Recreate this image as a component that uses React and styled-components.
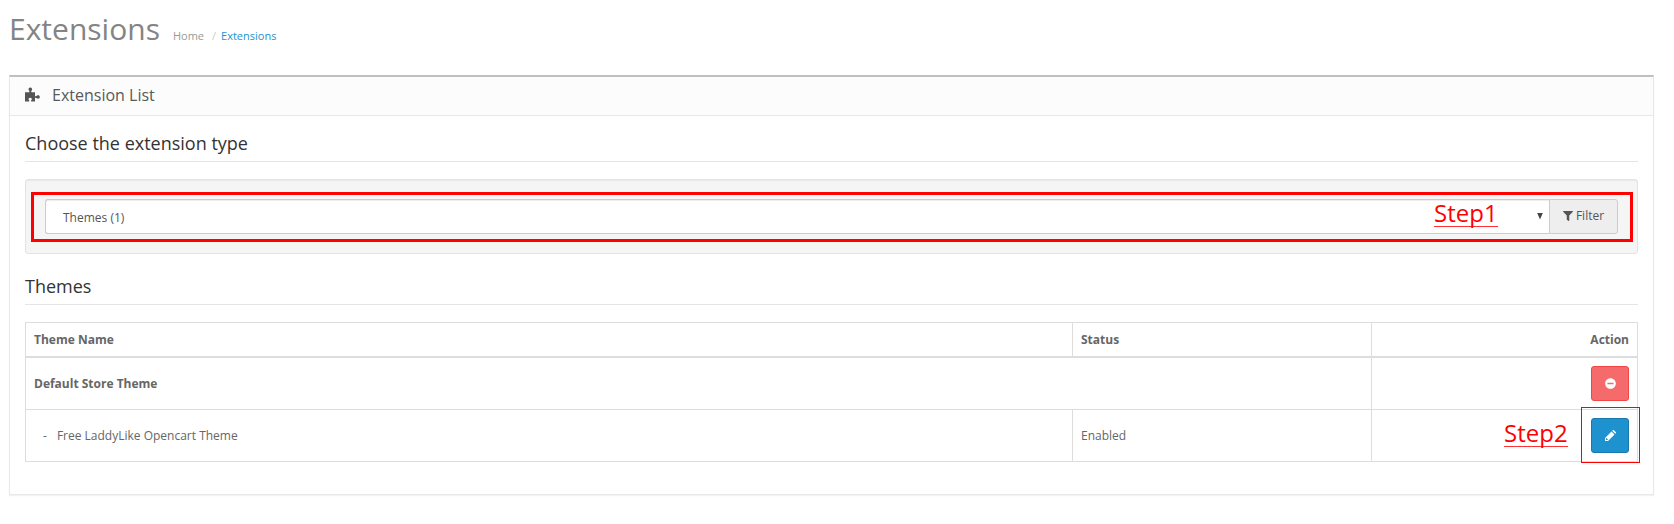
import React from "react";
import styled, { createGlobalStyle } from "styled-components";
import { FaFilter, FaMinusCircle } from "react-icons/fa";

const GlobalStyle = createGlobalStyle`
  *, *::before, *::after { box-sizing: border-box; }
  body {
    margin: 0;
    background: #fff;
    color: #666;
    font: 12px/17px "Open Sans", sans-serif;
  }
  svg { display: block; }
`;

const Page = styled.main`
  position: relative;
  height: 524px;
  padding: 0 20px 0 9px;
  overflow: hidden;
`;

const PageHeader = styled.header`
  display: flex;
  align-items: baseline;
  height: 75px;
  padding-top: 9px;
`;

const Title = styled.h1`
  margin: 0;
  font-size: 30px;
  line-height: 40px;
  font-weight: 400;
  color: #848484;
`;

const Breadcrumb = styled.ul`
  display: flex;
  margin: 0 0 0 13px;
  padding: 0;
  list-style: none;
  font-size: 11px;
`;

const Crumb = styled.li`
  color: ${(p) => (p.$current ? "#1e91cf" : "#999")};
  &:not(:first-child)::before {
    content: "/";
    padding: 0 5px 0 8px;
    color: #ccc;
  }
`;

const Panel = styled.section`
  width: 1645px;
  height: 420px;
  border: 1px solid #e8e8e8;
  border-top: 2px solid #bfbfbf;
  box-shadow: 0 1px 1px rgba(0, 0, 0, 0.05);
`;

const PanelHeading = styled.div`
  display: flex;
  align-items: center;
  gap: 12px;
  height: 39px;
  padding: 0 15px 2px;
  border-bottom: 1px solid #e8e8e8;
  background: #fcfcfc;
  color: #4c4d5a;
`;

const PuzzleIcon = styled.svg`
  width: 15px;
  height: 15px;
  margin-top: -1px;
  fill: #555;
`;

const PanelTitle = styled.h3`
  margin: 0;
  font-size: 16px;
  line-height: 20px;
  font-weight: 400;
  color: #595959;
`;

const PanelBody = styled.div`
  padding: 15px 15px 0 15px;
`;

const Legend = styled.h2`
  height: 31px;
  margin: 0 0 17px;
  border-bottom: 1px solid #e5e5e5;
  font-size: 18px;
  line-height: 25px;
  font-weight: 400;
  color: #333;
`;

const Well = styled.div`
  height: 75px;
  margin-bottom: 20px;
  padding: 19px;
  border: 1px solid #e3e3e3;
  border-radius: 3px;
  background: #f5f5f5;
  box-shadow: inset 0 1px 1px rgba(0, 0, 0, 0.05);
`;

const InputGroup = styled.div`
  display: flex;
  height: 35px;
`;

const Select = styled.div`
  display: flex;
  flex: 1;
  align-items: center;
  justify-content: space-between;
  padding: 2px 6px 0 17px;
  border: 1px solid #ccc;
  border-right: 0;
  border-radius: 3px 0 0 3px;
  background: #fff;
  color: #555;
  box-shadow: inset 0 1px 1px rgba(0, 0, 0, 0.075);
`;

const Caret = styled.i`
  width: 6px;
  height: 7px;
  margin-bottom: 3px;
  background: #444;
  clip-path: polygon(0 0, 100% 0, 50% 100%);
`;

const FilterButton = styled.button`
  display: flex;
  align-items: center;
  justify-content: center;
  gap: 3px;
  width: 69px;
  padding: 0 0 2px;
  border: 1px solid #ccc;
  border-radius: 0 3px 3px 0;
  background: #eee;
  color: #555;
  font: inherit;
`;

const Table = styled.table`
  width: 1613px;
  border-collapse: collapse;
  table-layout: fixed;
`;

const cell = `
  padding: 0 8px;
  border: 1px solid #ddd;
  text-align: left;
`;

const Th = styled.th`
  ${cell}
  height: 34px;
  border-bottom-width: 2px;
  font-weight: 700;
  text-align: ${(p) => (p.$end ? "right" : "left")};
`;

const Td = styled.td`
  ${cell}
  height: ${(p) => (p.$tall ? 53 : 52)}px;
  font-weight: ${(p) => (p.$strong ? 700 : 400)};
`;

const ChildName = styled.span`
  display: flex;
  gap: 10px;
  padding-left: 9px;
`;

const ActionButton = styled.button`
  display: flex;
  align-items: center;
  justify-content: center;
  width: 38px;
  height: 35px;
  margin-left: auto;
  padding: 0;
  border: 1px solid ${(p) => (p.$danger ? "#f24545" : "#1978ab")};
  border-radius: 3px;
  background: ${(p) => (p.$danger ? "#f56b6b" : "#1e91cf")};
  color: #fff;
`;

const Highlight = styled.div`
  position: absolute;
  left: ${(p) => p.$x}px;
  top: ${(p) => p.$y}px;
  width: ${(p) => p.$w}px;
  height: ${(p) => p.$h}px;
  border: ${(p) => p.$line}px solid #f00;
  pointer-events: none;
`;

const StepLabel = styled.span`
  position: absolute;
  left: ${(p) => p.$x}px;
  top: ${(p) => p.$y}px;
  height: 28px;
  border-bottom: 1px solid #f33;
  font-size: 24px;
  line-height: 28px;
  color: #f00;
`;

const Puzzle = () => (
  <PuzzleIcon viewBox="0 0 15 15" aria-hidden="true">
    <path d="M0 5.2H4.2C4.7 5 4.5 4.3 4 3.6C2.9 2 3.8.4 5.3.4S7.7 2 6.7 3.6C6.2 4.3 6 5 6.5 5.2H10V9C10.3 9.6 10.9 9.4 11.7 8.8C13.2 7.8 14.8 8.5 14.8 10S13.2 12.3 11.7 11.3C10.9 10.7 10.3 10.6 10 11.2V14.4H6.3C5.8 14 6.1 13.4 6.6 12.8C7.3 11.7 6.5 10.7 5.2 10.7S3.1 11.7 3.8 12.8C4.3 13.4 4.6 14 4.1 14.4H0Z" />
  </PuzzleIcon>
);

const Pencil = () => (
  <svg width="11" height="11" viewBox="0 0 11 11" fill="currentColor" aria-hidden="true">
    <path fillRule="evenodd" d="M0 8 6.5 1.5 9.5 4.5 3 11H0ZM1 8.6V10H2.4L3 9.4 1.6 8ZM7.2.8 7.7.3Q8.3-.2 8.9.3L10.7 2.1Q11.2 2.7 10.7 3.3L10.2 3.8Z" />
  </svg>
);

export default function App() {
  return (
    <Page>
      <GlobalStyle />
      <PageHeader>
        <Title>Extensions</Title>
        <Breadcrumb>
          <Crumb>Home</Crumb>
          <Crumb $current>Extensions</Crumb>
        </Breadcrumb>
      </PageHeader>
      <Panel>
        <PanelHeading>
          <Puzzle />
          <PanelTitle>Extension List</PanelTitle>
        </PanelHeading>
        <PanelBody>
          <Legend>Choose the extension type</Legend>
          <Well>
            <InputGroup>
              <Select>
                Themes (1)
                <Caret />
              </Select>
              <FilterButton>
                <FaFilter size={10} />
                Filter
              </FilterButton>
            </InputGroup>
          </Well>
          <Legend>Themes</Legend>
          <Table>
            <colgroup>
              <col style={{ width: 1047 }} />
              <col style={{ width: 299 }} />
              <col />
            </colgroup>
            <thead>
              <tr>
                <Th>Theme Name</Th>
                <Th>Status</Th>
                <Th $end>Action</Th>
              </tr>
            </thead>
            <tbody>
              <tr>
                <Td $strong $tall colSpan={2}>Default Store Theme</Td>
                <Td $tall>
                  <ActionButton $danger aria-label="Uninstall">
                    <FaMinusCircle size={11} />
                  </ActionButton>
                </Td>
              </tr>
              <tr>
                <Td>
                  <ChildName>
                    <span>-</span>
                    <span>Free LaddyLike Opencart Theme</span>
                  </ChildName>
                </Td>
                <Td>Enabled</Td>
                <Td>
                  <ActionButton aria-label="Edit">
                    <Pencil />
                  </ActionButton>
                </Td>
              </tr>
            </tbody>
          </Table>
        </PanelBody>
      </Panel>
      <Highlight $x={31} $y={192} $w={1602} $h={50} $line={3} />
      <StepLabel $x={1434} $y={199}>Step1</StepLabel>
      <Highlight $x={1581} $y={407} $w={59} $h={56} $line={1} />
      <StepLabel $x={1504} $y={419}>Step2</StepLabel>
    </Page>
  );
}
